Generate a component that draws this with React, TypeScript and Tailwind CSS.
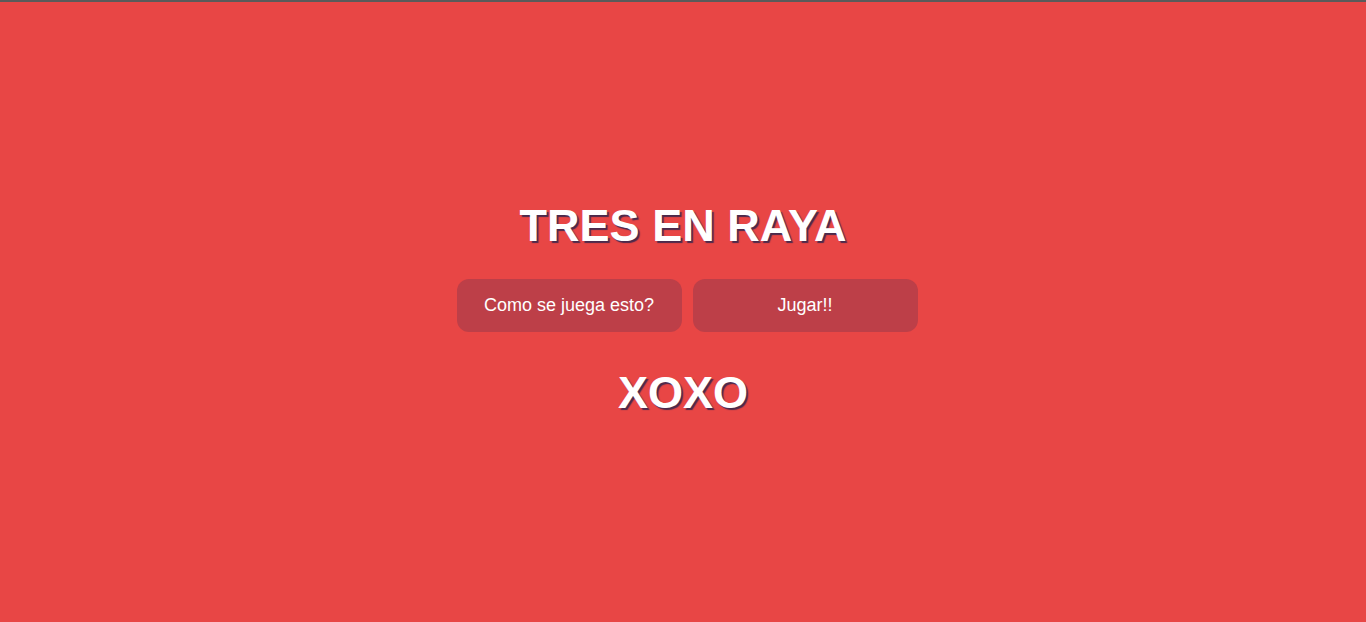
const buttons = ["Como se juega esto?", "Jugar!!"];

export default function App() {
  return (
    <div className="flex h-[622px] flex-col items-center justify-center border-t-2 border-[#5a5a5a] bg-[#e84645] pb-[6px] font-['Liberation_Sans',Arial,sans-serif] text-white">
      <h1 className="text-[45px] font-bold leading-none [text-shadow:2px_2px_1px_#4b2a4c]">
        TRES EN RAYA
      </h1>
      <div className="mt-[31px] ml-[8px] flex gap-[11px]">
        {buttons.map((label) => (
          <button
            key={label}
            className="h-[53px] w-[225px] rounded-[12px] bg-[#bd3f48] text-[18px]"
          >
            {label}
          </button>
        ))}
      </div>
      <h2 className="mt-[38px] text-[45px] font-bold leading-none [text-shadow:2px_2px_1px_#4b2a4c]">
        XOXO
      </h2>
    </div>
  );
}
